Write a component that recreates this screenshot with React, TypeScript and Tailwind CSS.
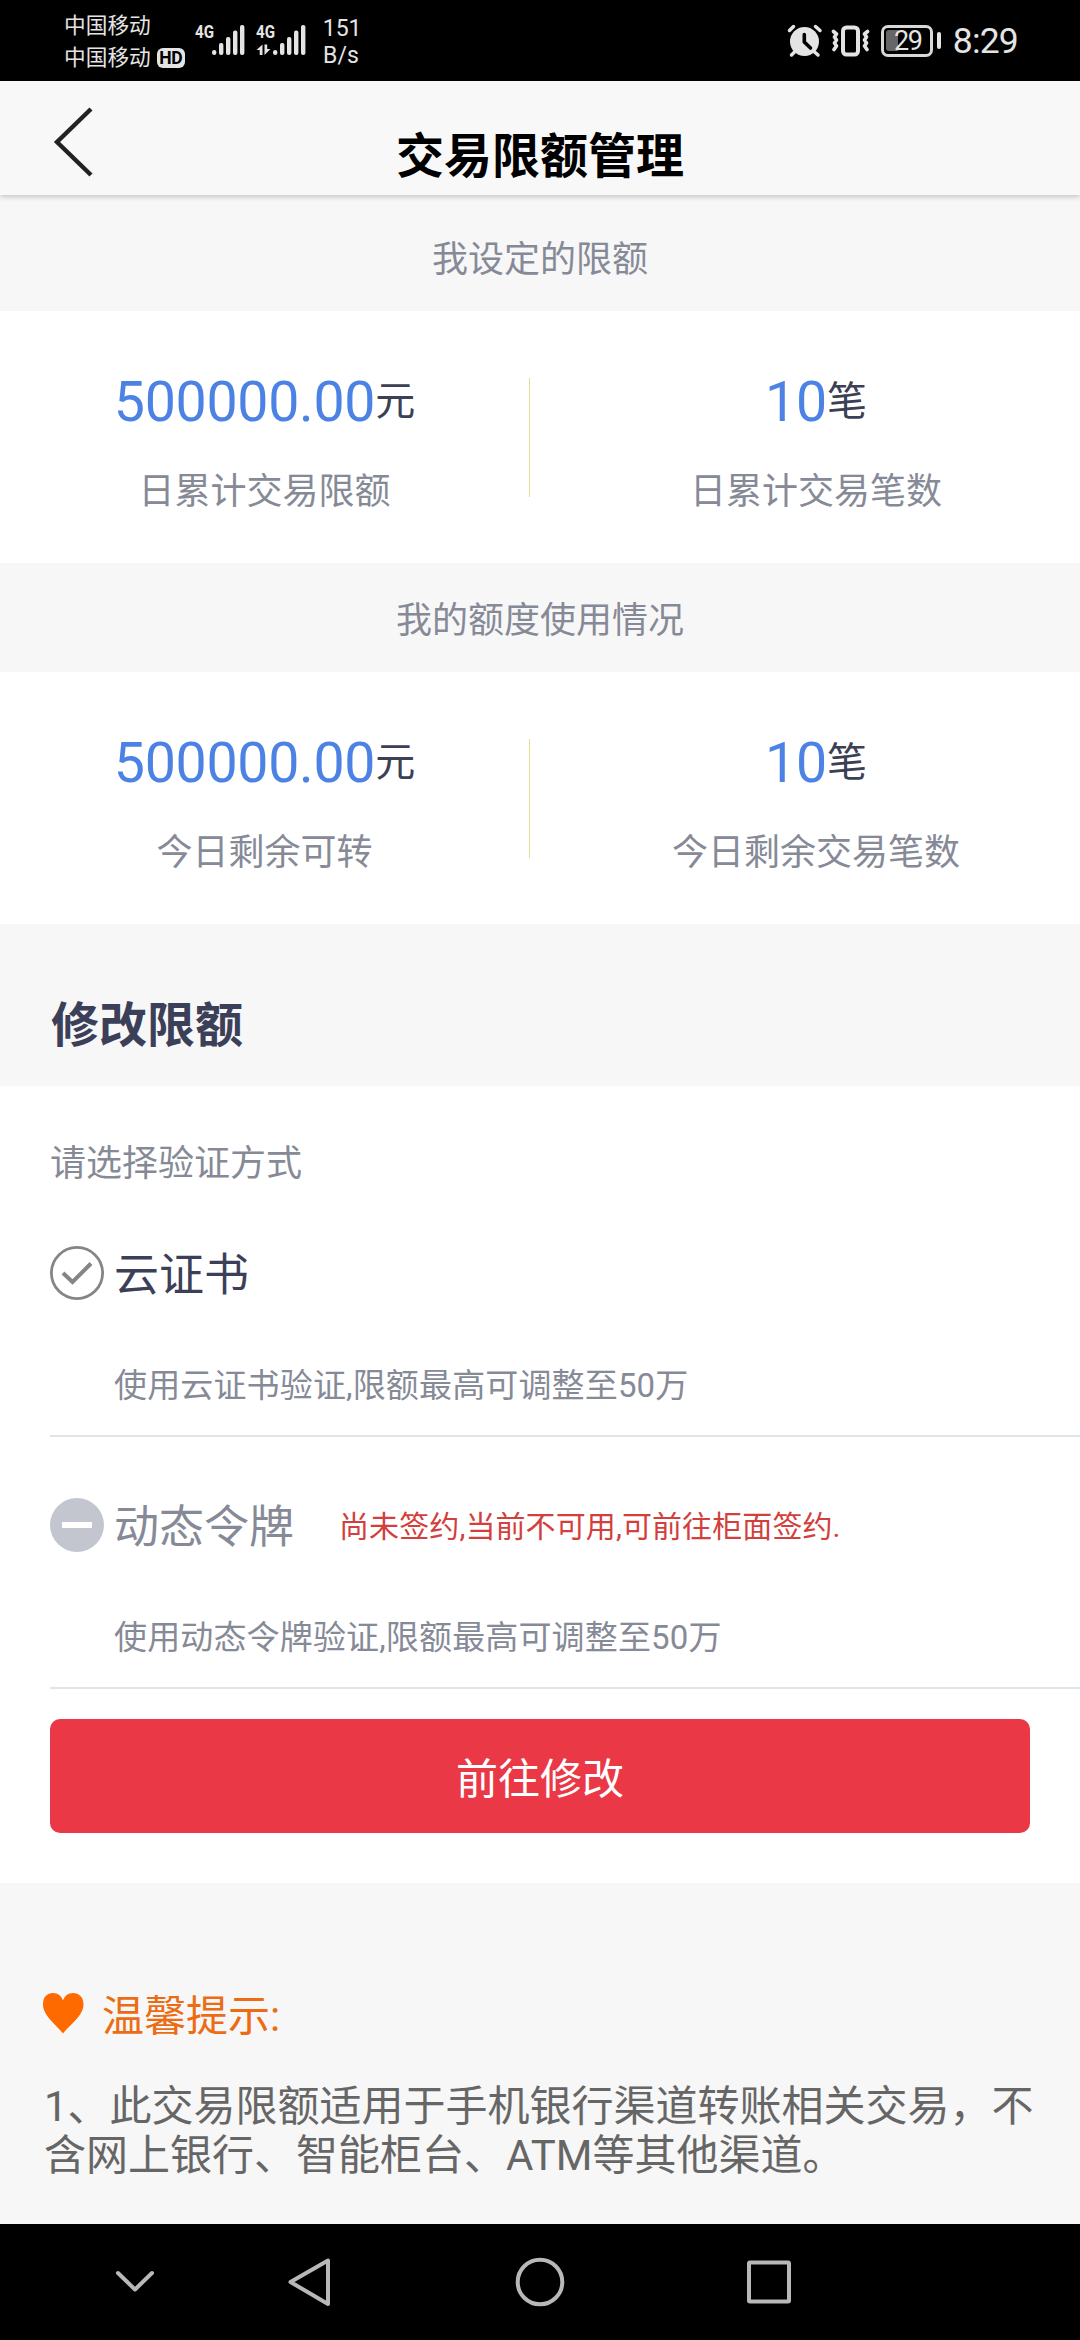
import type { ReactNode } from 'react'

interface Stat {
  value: string
  unit: string
  label: string
}

interface StatSectionProps {
  title: string
  left: Stat
  right: Stat
  titleClassName: string
}

function SignalBars() {
  return (
    <g fill="#e4e4e4">
      <rect x="17" y="26" width="4.4" height="5" rx="2.2" />
      <rect x="24" y="19" width="4.4" height="12" rx="2" />
      <rect x="31" y="13" width="4.4" height="18" rx="2" />
      <rect x="38" y="6.5" width="4.4" height="24.5" rx="2" />
      <rect x="45" y="1" width="4.4" height="30" rx="2" />
    </g>
  )
}

function Signal({ data = false }: { data?: boolean }) {
  return (
    <div className="relative h-8 w-[50px]">
      <svg width="50" height="32" viewBox="0 0 50 32">
        <SignalBars />
        {data && (
          <g fill="#e4e4e4">
            <path d="M6.5 20.5V31H3.7V26H0.5Z" />
            <path d="M8.5 20.5H11.2V25H14.5L8.5 31Z" />
          </g>
        )}
      </svg>
      <span className="absolute left-0 top-0 origin-left scale-x-[.84] text-[18px] font-bold leading-[16px]">4G</span>
    </div>
  )
}

function StatusBar() {
  return (
    <div className="flex h-[81px] bg-black text-[#e4e4e4]">
      <div className="ml-16 mt-[10px] text-[21.7px] leading-[32px]">
        <div>中国移动</div>
        <div className="flex items-center">
          中国移动
          <span className="ml-[6px] flex h-5 w-7 items-center justify-center rounded-[6px] bg-[#e4e4e4] text-[17.5px] font-bold tracking-tight text-black">
            HD
          </span>
        </div>
      </div>
      <div className="ml-[10px] mt-6">
        <Signal />
      </div>
      <div className="ml-[11px] mt-6">
        <Signal data />
      </div>
      <div className="ml-[17px] mt-[15px] w-[36px] text-right text-[23px] leading-[27px]">
        <div>151</div>
        <div>B/s</div>
      </div>
      <div className="ml-auto mr-[62px] flex h-full items-center">
        <svg width="36" height="34" viewBox="0 0 36 34" className="mr-[8px]">
          <circle cx="17.5" cy="17.5" r="14.5" fill="#e4e4e4" />
          <path d="M2.5 6.5L6.5 2.5M28.5 2.5L33 6.5M4.5 31L8 27.5M31 31L27 27.5" stroke="#e4e4e4" strokeWidth="3.5" strokeLinecap="round" />
          <path d="M17.3 10.5V18L23.5 24" fill="none" stroke="#000" strokeWidth="3.6" strokeLinecap="round" />
        </svg>
        <svg width="40" height="34" viewBox="0 0 40 34" className="mr-[10px]" fill="none" stroke="#e4e4e4">
          <rect x="12" y="3.5" width="15" height="27" rx="3.5" strokeWidth="4" />
          <path d="M2.500 7.500L5.500 10L3.500 13L5.500 16L3.500 19L5.500 22L3 25.500M36.500 7.500L33.500 10L35.500 13L33.500 16L35.500 19L33.500 22L36 25.500" strokeWidth="3.600" strokeLinecap="round" strokeLinejoin="round" />
        </svg>
        <div className="relative flex h-8 w-[52px] items-center justify-center rounded-[7px] border-[3.5px] border-[#d8d8d8]">
          <div className="absolute left-[2px] top-[2px] h-[21px] w-[12px] rounded-l-[3px] bg-[#666]" />
          <span className="relative ml-[2px] text-[27px] leading-[26px] tracking-[-1.5px]">29</span>
        </div>
        <div className="ml-1 h-[17px] w-[4px] rounded-[2px] bg-[#e4e4e4]" />
        <span className="ml-[12px] mt-[2px] text-[35.5px] leading-none tracking-[-0.8px]">8:29</span>
      </div>
    </div>
  )
}

function Header() {
  return (
    <div className="relative z-10 flex h-[114px] items-start justify-center bg-[#f8f8f8] pt-[47px] shadow-[0_2px_5px_rgba(0,0,0,0.2)]">
      <svg className="absolute left-[50px] top-[23px]" width="46" height="76" viewBox="0 0 46 76">
        <path d="M41 5L7 38L41 71" fill="none" stroke="#222" strokeWidth="4.4" />
      </svg>
      <h1 className="text-[48px] font-bold leading-[58px] text-black">交易限额管理</h1>
    </div>
  )
}

function StatItem({ stat, className }: { stat: Stat; className: string }) {
  return (
    <div className={className}>
      <div className="flex h-[60px] items-center justify-center">
        <span className="mt-[3px] text-[55.5px] leading-[60px] tracking-[-0.3px] text-[#4c82e4]">{stat.value}</span>
        <span className="mt-px text-[40px] leading-[60px] text-[#3b4055]">{stat.unit}</span>
      </div>
      <div className="mt-[36px] text-center text-[36px] leading-[50px] text-[#868a97]">{stat.label}</div>
    </div>
  )
}

function StatSection({ title, left, right, titleClassName }: StatSectionProps) {
  return (
    <section>
      <div className={titleClassName}>{title}</div>
      <div className="flex h-[252px] bg-white pt-[60px]">
        <StatItem stat={left} className="w-[529px]" />
        <div className="mt-[7px] h-[119px] w-px bg-[#e3df90]" />
        <StatItem stat={right} className="ml-[22px] w-[528px]" />
      </div>
    </section>
  )
}

interface MethodProps {
  icon: ReactNode
  name: string
  nameClassName: string
  note?: string
  description: string
}

function Method({ icon, name, nameClassName, note, description }: MethodProps) {
  return (
    <div className="ml-[50px] h-[252px] border-b-2 border-[#e3e4e5] pt-[61px]">
      <div className="flex h-[54px] items-center">
        {icon}
        <span className={nameClassName}>{name}</span>
        {note && <span className="ml-[45px] mt-[3px] text-[30px] leading-[40px] tracking-[0.1px] text-[#d23f3d]">{note}</span>}
      </div>
      <div className="ml-[64px] mt-[61px] text-[33px] leading-[50px] tracking-[0.15px] text-[#868a97]">{description}</div>
    </div>
  )
}

function NavBar() {
  return (
    <div className="mt-auto h-[116px] bg-black">
      <svg width="1080" height="116" viewBox="0 0 1080 116" fill="none" stroke="#b8b8b8" strokeWidth="4" strokeLinecap="round" strokeLinejoin="round">
        <path d="M118 49L135 65.500L152 49" />
        <path d="M328 36.500V80L290.500 58Z" />
        <circle cx="540" cy="58" r="22.300" />
        <rect x="749" y="38.500" width="40" height="39" rx="1" />
      </svg>
    </div>
  )
}

export default function App() {
  return (
    <div className="flex h-[2340px] w-[1080px] flex-col overflow-hidden whitespace-nowrap bg-[#f7f7f7] font-[Roboto,'Noto_Sans_CJK_SC',sans-serif]">
      <StatusBar />
      <Header />
      <StatSection
        title="我设定的限额"
        titleClassName="h-[116px] pt-[40px] text-center text-[36px] leading-[50px] text-[#868a97]"
        left={{ value: '500000.00', unit: '元', label: '日累计交易限额' }}
        right={{ value: '10', unit: '笔', label: '日累计交易笔数' }}
      />
      <StatSection
        title="我的额度使用情况"
        titleClassName="h-[109px] pt-[33px] text-center text-[36px] leading-[50px] text-[#868a97]"
        left={{ value: '500000.00', unit: '元', label: '今日剩余可转' }}
        right={{ value: '10', unit: '笔', label: '今日剩余交易笔数' }}
      />

      <h2 className="h-[162px] pl-[51px] pt-[72px] text-[48px] font-bold leading-[60px] text-[#3b4058]">修改限额</h2>

      <section className="h-[797px] bg-white pt-[53px]">
        <div className="h-[46px] pl-[50px] text-[36px] leading-[50px] text-[#868a97]">请选择验证方式</div>
        <Method
          icon={
            <svg width="54" height="54" viewBox="0 0 54 54" fill="none" stroke="#858585">
              <circle cx="27" cy="27" r="25.6" strokeWidth="2.8" />
              <path d="M13 27L22.500 36L41 17.500" strokeWidth="4" />
            </svg>
          }
          name="云证书"
          nameClassName="ml-[10px] text-[45px] leading-[54px] mt-[6px] text-[#3b4058]"
          description="使用云证书验证,限额最高可调整至50万"
        />
        <Method
          icon={
            <svg width="54" height="54" viewBox="0 0 54 54">
              <circle cx="27" cy="27" r="27" fill="#c3c6cf" />
              <rect x="12" y="24" width="30" height="6" fill="#fff" />
            </svg>
          }
          name="动态令牌"
          nameClassName="ml-[10px] text-[45px] leading-[54px] mt-[6px] text-[#868a97]"
          note="尚未签约,当前不可用,可前往柜面签约."
          description="使用动态令牌验证,限额最高可调整至50万"
        />
        <button className="mx-[50px] mt-[30px] flex h-[114px] w-[980px] items-center justify-center rounded-[10px] bg-[#ea3847] pt-[6px] text-[42px] text-white">
          前往修改
        </button>
      </section>

      <section className="pt-[102px]">
        <div className="flex h-[60px] items-center">
          <svg className="mb-[5px] ml-[42px]" width="42" height="42" viewBox="0 0 42 42">
            <path d="M21 41.500C15 33.500 1 24 1 12.500C1 5 5 1 11 1C16 1 19.500 4 21 8.500C22.500 4 26 1 31 1C37 1 41.500 5 41.500 12.500C41.500 24 27 33.500 21 41.500Z" fill="#ff6a00" />
          </svg>
          <span className="ml-[18px] mt-[4px] text-[42px] leading-[60px] text-[#ec6c14]">温馨提示:</span>
        </div>
        <p className="ml-[44px] mt-[37px] text-[42px] leading-[49px] text-[#666]">
          1、此交易限额适用于手机银行渠道转账相关交易，不
          <br />
          含网上银行、智能柜台、ATM等其他渠道。
        </p>
      </section>
      <NavBar />
    </div>
  )
}
